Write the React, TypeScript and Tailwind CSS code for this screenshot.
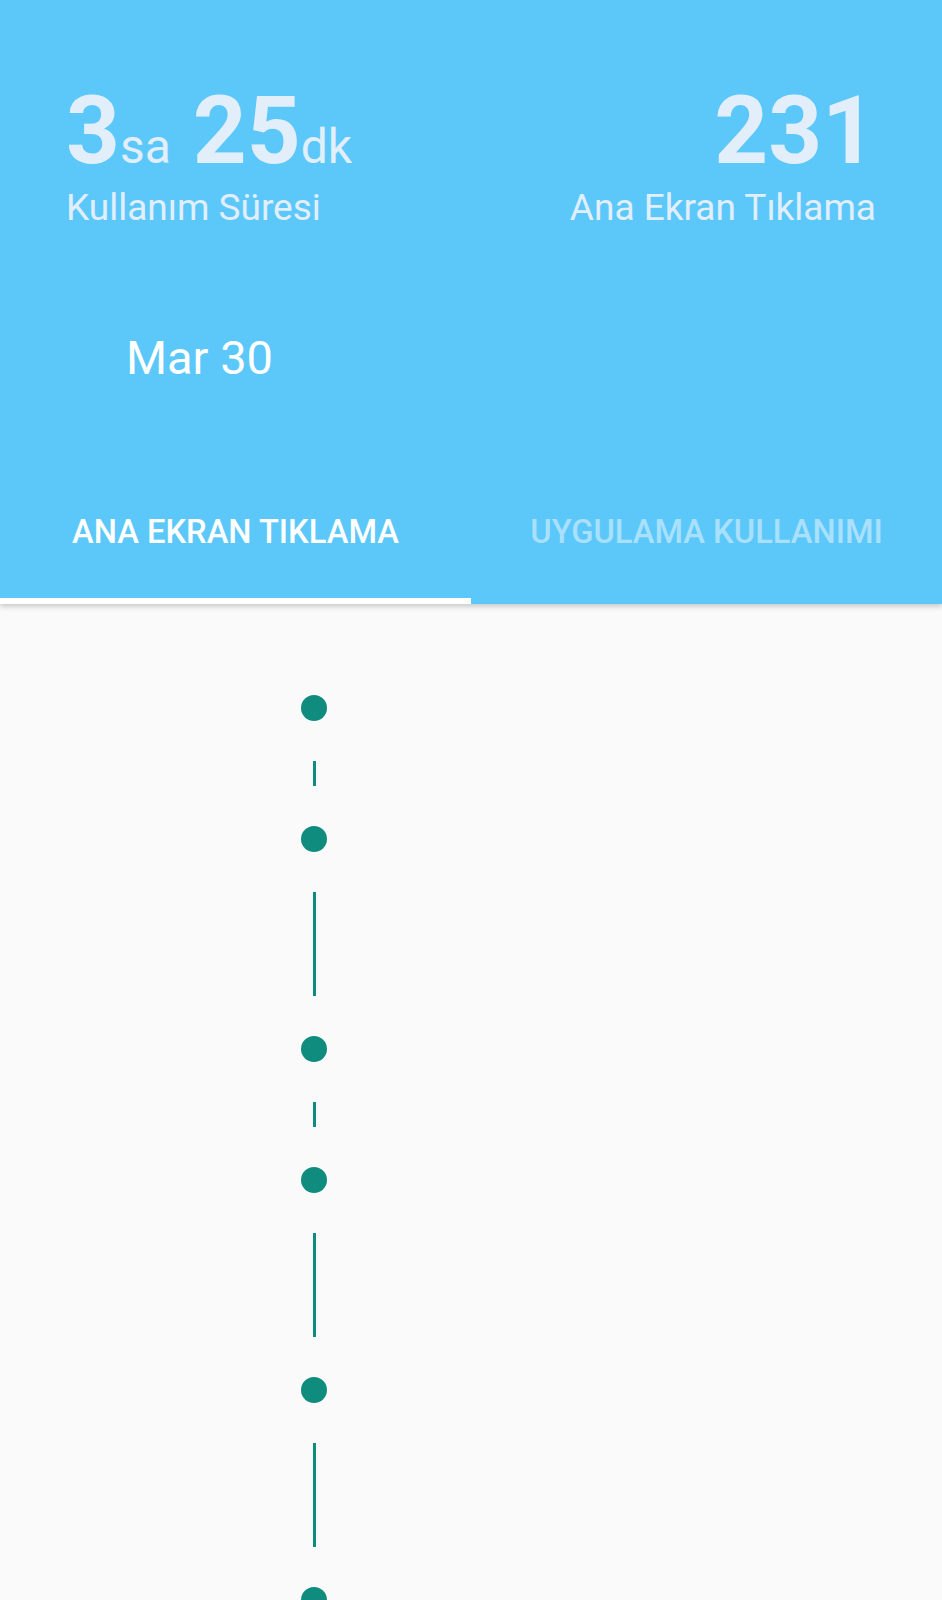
import React from "react";

const Dot = () => <div className="h-[26px] w-[26px] rounded-full bg-[#0f8c7e]" />;
const Line = ({ h }: { h: "short" | "long" }) => (
  <div className={h === "short" ? "my-[40px] h-[25px] w-[3px] bg-[#0f8c7e]" : "my-[40px] h-[104px] w-[3px] bg-[#0f8c7e]"} />
);

export default function App() {
  const segs: ("short" | "long")[] = ["short", "long", "short", "long", "long"];
  return (
    <div className="h-[1600px] w-[942px] overflow-hidden bg-[#fafafa]" style={{ fontFamily: "Roboto, 'Noto Sans', sans-serif" }}>
      <header className="relative z-10 h-[604px] bg-[#5cc8fa] shadow-[0_3px_5px_rgba(0,0,0,0.18)] flex flex-col">
        <div className="flex justify-between px-[66px] pt-[83px] text-[#e2effa]">
          <div className="flex flex-col">
            <div className="flex items-baseline h-[96px] leading-[96px]">
              <span className="text-[94px] font-bold">3</span>
              <span className="text-[48px] ml-0">sa</span>
              <span className="text-[94px] font-bold ml-[22px]">25</span>
              <span className="text-[48px] ml-0">dk</span>
            </div>
            <div className="mt-[10px] text-[37px] leading-[38px]">Kullanım Süresi</div>
          </div>
          <div className="flex flex-col items-end">
            <div className="h-[96px] text-[94px] font-bold leading-[96px]">231</div>
            <div className="mt-[10px] text-[37px] leading-[38px]">Ana Ekran Tıklama</div>
          </div>
        </div>
        <div className="mt-[107px] pl-[126px] text-[47px] leading-[47px] text-white">Mar 30</div>
        <div className="mt-auto flex h-[144px]">
          <div className="relative flex flex-1 items-center justify-center">
            <span className="text-[32.7px] font-medium leading-[32px] text-white">ANA EKRAN TIKLAMA</span>
            <div className="absolute bottom-0 left-0 right-0 h-[6px] bg-white" />
          </div>
          <div className="flex flex-1 items-center justify-center">
            <span className="text-[32.7px] font-medium leading-[32px] text-[#a9e0fb]">UYGULAMA KULLANIMI</span>
          </div>
        </div>
      </header>
      <main className="flex flex-col items-center w-[26px] ml-[301px] pt-[91px]">
        <Dot />
        {segs.map((s, i) => (
          <React.Fragment key={i}>
            <Line h={s} />
            <Dot />
          </React.Fragment>
        ))}
      </main>
    </div>
  );
}
